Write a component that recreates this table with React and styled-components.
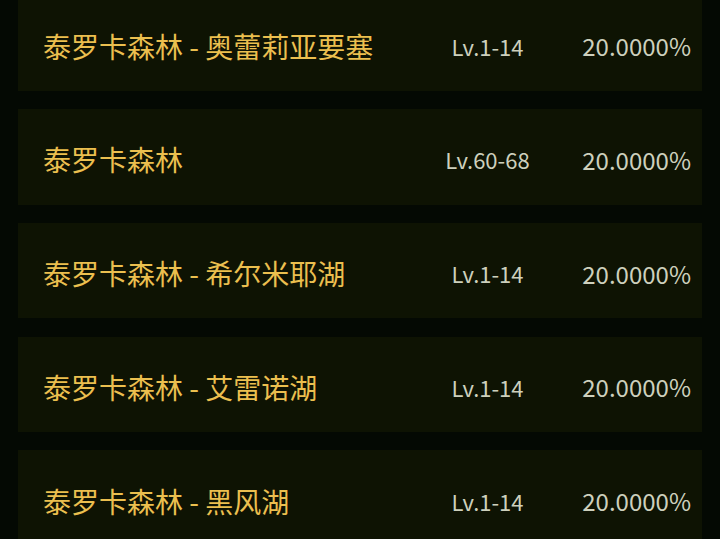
import React from "react";
import styled, { createGlobalStyle } from "styled-components";

const Global = createGlobalStyle`
  html, body { margin: 0; padding: 0; background: #040903; }
  body { width: 720px; height: 539px; overflow: hidden; }
`;

const Page = styled.div`
  width: 720px;
  height: 539px;
  overflow: hidden;
  background: #040903;
  font-family: "Noto Sans CJK SC", "Noto Sans", sans-serif;
`;

const List = styled.div`
  display: flex;
  flex-direction: column;
  gap: 18.25px;
  margin-top: -4.75px;
  padding: 0 18px;
`;

const Card = styled.div`
  height: 95.5px;
  box-sizing: border-box;
  background: #0e1303;
  display: grid;
  grid-template-columns: 1fr 127px 140px;
  align-items: center;
  padding: 5px 11px 0 25px;
`;

const Name = styled.span`
  color: #ebbf4f;
  font-size: 28px;
  white-space: nowrap;
`;

const Level = styled.span`
  color: #cdd0bd;
  font-size: 22px;
  text-align: center;
  white-space: nowrap;
`;

const Rate = styled.span`
  color: #cdd0bd;
  font-size: 24px;
  text-align: right;
  white-space: nowrap;
`;

const rows = [
  { name: "泰罗卡森林 - 奥蕾莉亚要塞", level: "Lv.1-14", rate: "20.0000%" },
  { name: "泰罗卡森林", level: "Lv.60-68", rate: "20.0000%" },
  { name: "泰罗卡森林 - 希尔米耶湖", level: "Lv.1-14", rate: "20.0000%" },
  { name: "泰罗卡森林 - 艾雷诺湖", level: "Lv.1-14", rate: "20.0000%" },
  { name: "泰罗卡森林 - 黑风湖", level: "Lv.1-14", rate: "20.0000%" },
];

export default function App() {
  return (
    <Page>
      <Global />
      <List>
        {rows.map((r, i) => (
          <Card key={i}>
            <Name>{r.name}</Name>
            <Level>{r.level}</Level>
            <Rate>{r.rate}</Rate>
          </Card>
        ))}
      </List>
    </Page>
  );
}
